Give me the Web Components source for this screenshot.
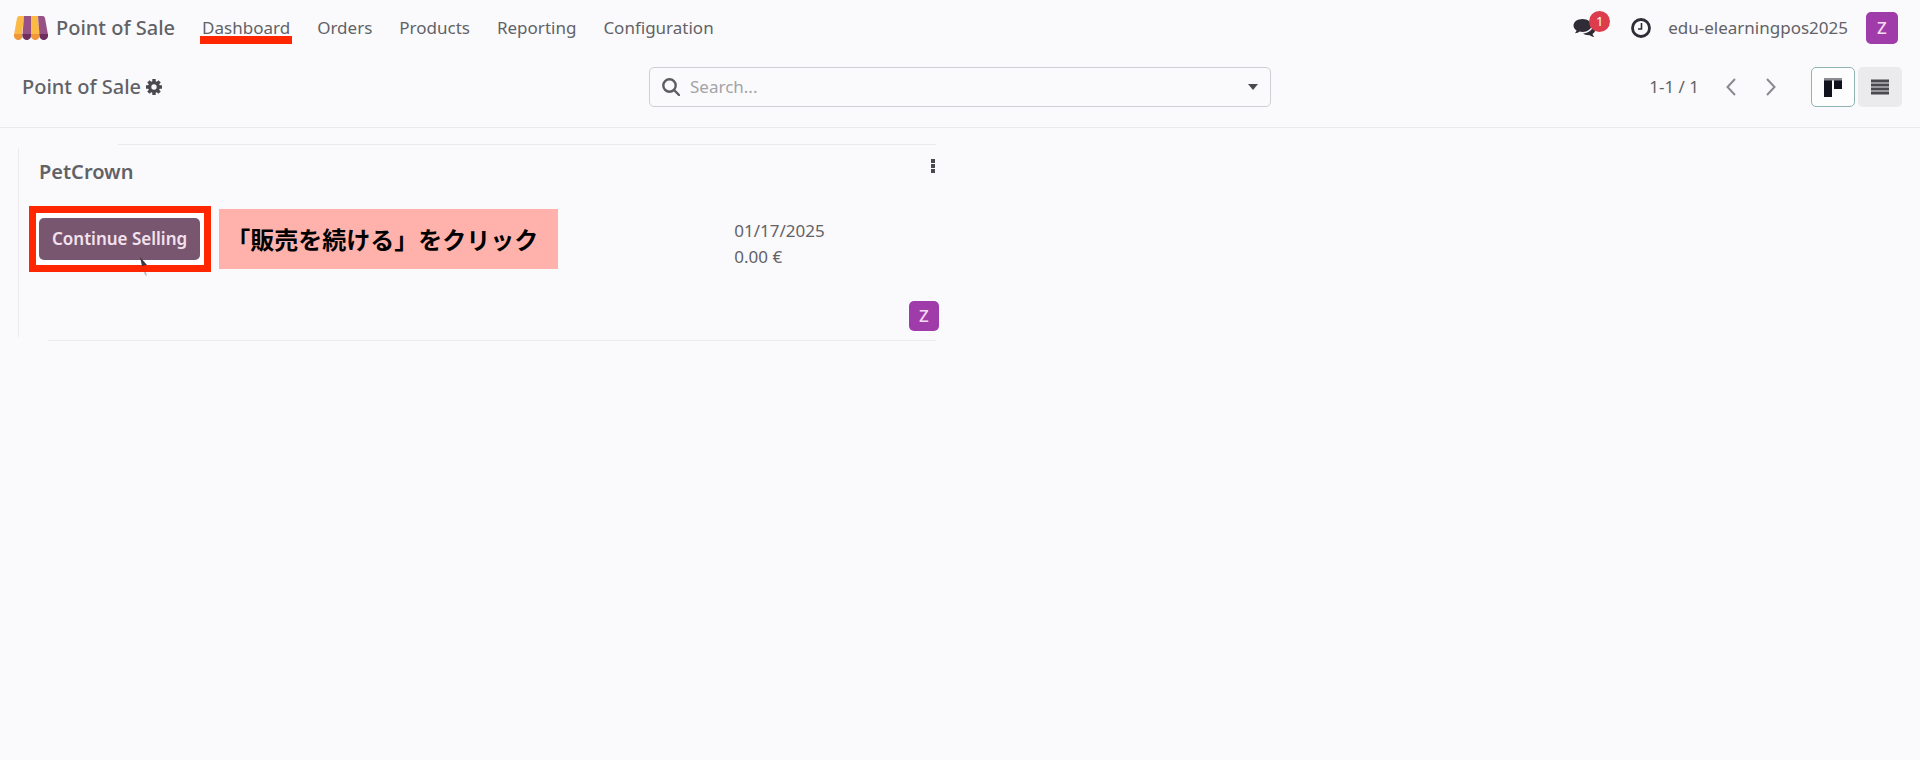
<!DOCTYPE html>
<html lang="en">
<head>
<meta charset="utf-8">
<title>Point of Sale</title>
<style>
  body {
    margin: 0;
    min-height: 100vh;
    background: #fafafd;
    color: #626266;
    font: 400 17px/24px "Noto Sans", "Noto Sans CJK JP", sans-serif;
  }
</style>
</head>
<body>
<pos-app></pos-app>

<script>
const ICONS = {
  shop: `<svg width="34" height="24" viewBox="0 0 34 24">
    <path d="M3 2q.4-2 2.400-2H10L8 19H0z" fill="#fbb945"/>
    <path d="M0 18h8.500v2a4.200 4 0 0 1-8.500 0z" fill="#f0973a"/>
    <path d="M10 0h7v19H8.500z" fill="#985184"/>
    <path d="M8.500 18H17v2a4.200 4 0 0 1-8.500 0z" fill="#6c2f5f"/>
    <path d="M17 0h7l1.500 19H17z" fill="#fbb945"/>
    <path d="M17 18h8.500v2a4.200 4 0 0 1-8.500 0z" fill="#f0973a"/>
    <path d="M24 0h4.600q2 0 2.400 2l3 17h-8.500z" fill="#985184"/>
    <path d="M25.500 18H34v2a4.200 4 0 0 1-8.500 0z" fill="#6c2f5f"/>
  </svg>`,
  gear: `<svg width="16" height="16" viewBox="0 0 16 16">
    <g stroke="#4a4a4e" stroke-width="3.400"><path d="M8 0v16M0 8h16M2.400 2.400l11.200 11.200M13.600 2.400L2.400 13.600"/></g>
    <circle cx="8" cy="8" r="6" fill="#4a4a4e"/>
    <circle cx="8" cy="8" r="2.700" fill="#fafafd"/>
  </svg>`,
  search: `<svg width="18" height="18" viewBox="0 0 18 18" fill="none" stroke="#5d5d61" stroke-width="2.400">
    <circle cx="7.500" cy="7.500" r="6.200"/><path d="M12 12l5 5" stroke-linecap="round"/>
  </svg>`,
  caret: `<svg width="10" height="6" viewBox="0 0 10 6"><path d="M0 0h10L5 6z" fill="#4a4a4e"/></svg>`,
  chat: `<svg width="24" height="20" viewBox="0 0 24 20" fill="#302c35">
    <path d="M9.500 1C4.500 1 .5 3.800.5 7.500c0 2 1.200 3.800 3.100 5-.3 1.200-1 2-1.800 2.800 2 0 3.600-.7 4.800-1.700.9.200 1.900.3 2.900.3 5 0 9-2.800 9-6.400S14.500 1 9.500 1z"/>
    <path d="M19.800 7.500c0 4.600-4.600 7.700-9.800 7.900 1.600 1.200 4 1.900 6.300 1.700 1.400 1 3 1.800 5 1.800-.9-.8-1.500-1.700-1.800-2.900 1.800-1 2.800-2.500 2.800-4.200 0-1.700-.9-3.200-2.500-4.300z"/>
  </svg>`,
  clock: `<svg width="20" height="20" viewBox="0 0 20 20" fill="none" stroke="#302c35">
    <circle cx="10" cy="10" r="8.500" stroke-width="2.800"/><path d="M10.500 5v6H7" stroke-width="1.600"/>
  </svg>`,
  prev: `<svg width="10" height="18" viewBox="0 0 10 18" fill="none" stroke="#8a8a8e" stroke-width="2"><path d="M9 1L1.500 9 9 17"/></svg>`,
  next: `<svg width="10" height="18" viewBox="0 0 10 18" fill="none" stroke="#8a8a8e" stroke-width="2"><path d="M1 1l7.500 8L1 17"/></svg>`,
  kanban: `<svg width="20" height="20" viewBox="0 0 20 20">
    <path d="M1 3h8v17H1zM11 3h8v9h-8z" fill="#10131c"/><path d="M1 1h18v2.500H1z" fill="#8b8b92"/>
  </svg>`,
  list: `<svg width="18" height="16" viewBox="0 0 18 16" stroke="#4a4a4f" stroke-width="3"><path d="M0 2h18M0 6h18M0 10h18M0 14h18"/></svg>`,
  kebab: `<svg width="4" height="14" viewBox="0 0 4 14" fill="#4a4a4e"><path d="M0 0h4v4H0zM0 5h4v4H0zM0 10h4v4H0z"/></svg>`,
  pointer: `<svg width="10" height="20" viewBox="0 0 10 20">
    <path d="M1 0l7 8-3 .5L3 9z" fill="#3f3643"/><path d="M5 15l2 0 1 4-2-1z" fill="#9a8f93" opacity=".6"/>
  </svg>`,
};

function makeTemplate(html) {
  const template = document.createElement('template');
  template.innerHTML = html;
  return template;
}

// button reset shared by the elements that hold icon buttons
const buttonReset = `
button {
  display: flex;
  align-items: center;
  justify-content: center;
  margin: 0;
  padding: 0;
  border: 0;
  background: none;
  color: inherit;
  font: inherit;
  cursor: pointer;
}
`;

class BaseElement extends HTMLElement {
  constructor() {
    super();
    this.attachShadow({ mode: 'open' });
    this.shadowRoot.appendChild(this.constructor.template.content.cloneNode(true));
  }
}

class UiIcon extends HTMLElement {
  constructor() {
    super();
    this.attachShadow({ mode: 'open' });
  }

  connectedCallback() {
    this.shadowRoot.innerHTML = `
      <style>
        :host { display: inline-flex; flex: none; }
        svg { display: block; }
      </style>
      ${ICONS[this.getAttribute('name')] || ''}
    `;
  }
}

class UserAvatar extends BaseElement {}
UserAvatar.template = makeTemplate(`
<style>
:host {
  display: flex;
  align-items: center;
  justify-content: center;
  width: var(--avatar-size, 32px);
  height: var(--avatar-size, 32px);
  border-radius: 5px;
  background: #a03caa;
  color: #f6dcf6;
  font-weight: 500;
}
</style>
<slot></slot>
`);

class NavLink extends BaseElement {
  connectedCallback() {
    this.shadowRoot.querySelector('a').setAttribute('href', this.getAttribute('href') || '#');
  }
}
NavLink.template = makeTemplate(`
<style>
:host { display: block; position: relative; }
a { color: inherit; text-decoration: none; }
:host([marked])::after {
  content: "";
  position: absolute;
  left: -2px;
  right: -2px;
  top: 20px;
  height: 8px;
  background: #ff2600;
}
</style>
<a><slot></slot></a>
`);

class MessageButton extends BaseElement {}
MessageButton.template = makeTemplate(`
<style>
${buttonReset}
:host { display: block; position: relative; }
span {
  position: absolute;
  left: 16px;
  top: -7px;
  width: 21px;
  border-radius: 50%;
  background: #dc3c4c;
  color: #fff;
  font-size: 13px;
  line-height: 21px;
  text-align: center;
}
</style>
<button type="button" aria-label="Messages"><ui-icon name="chat"></ui-icon></button>
<span><slot></slot></span>
`);

class TopBar extends BaseElement {}
TopBar.template = makeTemplate(`
<style>
${buttonReset}
:host {
  display: flex;
  align-items: center;
  justify-content: space-between;
  height: 56px;
  padding: 0 22px 0 14px;
}
.brand {
  display: flex;
  align-items: center;
  gap: 8px;
  color: inherit;
  font-size: 20px;
  font-weight: 500;
  text-decoration: none;
}
nav, .tray { display: flex; align-items: center; }
nav { gap: 27px; }
.clock { margin: 0 17px 0 34px; }
user-avatar { margin-left: 18px; }
</style>
<nav>
  <a class="brand" href="#"><ui-icon name="shop"></ui-icon>Point of Sale</a>
  <nav-link href="#dashboard" marked>Dashboard</nav-link>
  <nav-link href="#orders">Orders</nav-link>
  <nav-link href="#products">Products</nav-link>
  <nav-link href="#reporting">Reporting</nav-link>
  <nav-link href="#configuration">Configuration</nav-link>
</nav>
<div class="tray">
  <message-button>1</message-button>
  <button class="clock" type="button" aria-label="Activities"><ui-icon name="clock"></ui-icon></button>
  <span>edu-elearningpos2025</span>
  <user-avatar>Z</user-avatar>
</div>
`);

class SearchBox extends BaseElement {}
SearchBox.template = makeTemplate(`
<style>
${buttonReset}
:host {
  display: flex;
  align-items: center;
  box-sizing: border-box;
  height: 40px;
  padding: 0 12px;
  border: 1px solid #cfcfd3;
  border-radius: 5px;
}
label { display: flex; margin-right: 10px; }
input {
  flex: 1;
  min-width: 0;
  padding: 0;
  border: 0;
  outline: 0;
  background: none;
  color: inherit;
  font: inherit;
}
input::placeholder { color: #a3a3a7; opacity: 1; }
</style>
<label for="query" aria-label="Search"><ui-icon name="search"></ui-icon></label>
<input id="query" type="text" placeholder="Search...">
<button type="button" aria-label="Search options"><ui-icon name="caret"></ui-icon></button>
`);

class ViewSwitch extends BaseElement {}
ViewSwitch.template = makeTemplate(`
<style>
${buttonReset}
:host { display: flex; gap: 3px; }
button {
  box-sizing: border-box;
  width: 44px;
  height: 40px;
  border-radius: 5px;
  background: #ebebed;
}
button[aria-pressed="true"] {
  border: 1px solid #8fb5b3;
  background: #fdfdfe;
}
</style>
<button type="button" aria-label="Kanban view" aria-pressed="true"><ui-icon name="kanban"></ui-icon></button>
<button type="button" aria-label="List view" aria-pressed="false"><ui-icon name="list"></ui-icon></button>
`);

class ControlBar extends BaseElement {}
ControlBar.template = makeTemplate(`
<style>
${buttonReset}
:host {
  display: grid;
  grid-template-columns: 1fr minmax(0, 622px) 1fr;
  align-items: center;
  padding: 11px 18px 20px;
  border-bottom: 1px solid #e9e9ec;
}
.title, .tools { display: flex; align-items: center; }
.title { gap: 5px; padding-left: 4px; font-size: 20px; font-weight: 500; }
.tools { justify-content: flex-end; }
.pager { display: flex; gap: 30px; margin: 0 35px 0 27px; }
</style>
<div class="title">
  <span>Point of Sale</span>
  <button type="button" aria-label="Settings"><ui-icon name="gear"></ui-icon></button>
</div>
<search-box></search-box>
<div class="tools">
  <span>1-1 / 1</span>
  <div class="pager">
    <button type="button" aria-label="Previous"><ui-icon name="prev"></ui-icon></button>
    <button type="button" aria-label="Next"><ui-icon name="next"></ui-icon></button>
  </div>
  <view-switch></view-switch>
</div>
`);

// red frame round a control, with the mouse pointer over it
class HighlightFrame extends BaseElement {}
HighlightFrame.template = makeTemplate(`
<style>
:host {
  display: block;
  position: relative;
  padding: 5px 4px 5px 3px;
  border: 7px solid #ff2600;
  background: #fff;
}
ui-icon { position: absolute; left: 103px; top: 44px; }
</style>
<slot></slot>
<ui-icon name="pointer"></ui-icon>
`);

class PrimaryButton extends BaseElement {}
PrimaryButton.template = makeTemplate(`
<style>
${buttonReset}
:host { display: block; }
button {
  height: 42px;
  padding: 0 13px;
  border-radius: 5px;
  background: #79566f;
  color: #f3e2ee;
  font-weight: 600;
}
</style>
<button type="button"><slot></slot></button>
`);

class StepNote extends BaseElement {}
StepNote.template = makeTemplate(`
<style>
:host {
  display: block;
  padding: 0 20px 0 7px;
  background: #ffb2ab;
  color: #000;
  font: 700 24px/60px "Noto Sans CJK JP", sans-serif;
}
</style>
<slot></slot>
`);

class ShopCard extends BaseElement {}
ShopCard.template = makeTemplate(`
<style>
${buttonReset}
:host {
  --line: #ebebee;
  display: block;
  padding: 15px 9px 10px 0;
  background:
    linear-gradient(var(--line), var(--line)) 100px 0 / calc(100% - 112px) 1px no-repeat,
    linear-gradient(var(--line), var(--line)) 30px 100% / calc(100% - 42px) 1px no-repeat,
    linear-gradient(var(--line), var(--line)) 0 4px / 1px calc(100% - 8px) no-repeat;
}
header {
  display: flex;
  justify-content: space-between;
  align-items: flex-start;
  padding: 0 4px 0 21px;
}
h2 { margin: 0; font-size: 20px; line-height: 26px; font-weight: 600; }
.body {
  display: grid;
  grid-template-columns: 7fr 2fr;
  align-items: center;
  margin-top: 21px;
}
.action { display: flex; align-items: center; gap: 8px; padding-left: 11px; }
.stats { line-height: 26px; padding-top: 10px; }
footer { display: flex; justify-content: flex-end; margin-top: 29px; --avatar-size: 30px; }
</style>
<header>
  <h2><slot name="title"></slot></h2>
  <button type="button" aria-label="More"><ui-icon name="kebab"></ui-icon></button>
</header>
<div class="body">
  <div class="action"><slot name="action"></slot></div>
  <div class="stats"><slot></slot></div>
</div>
<footer><slot name="owner"></slot></footer>
`);

class PosApp extends BaseElement {}
PosApp.template = makeTemplate(`
<style>
:host { display: block; }
main {
  display: grid;
  grid-template-columns: 1fr 1fr;
  gap: 24px;
  padding: 16px 18px;
}
</style>
<top-bar></top-bar>
<control-bar></control-bar>
<main>
  <shop-card>
    <span slot="title">PetCrown</span>
    <highlight-frame slot="action"><primary-button>Continue Selling</primary-button></highlight-frame>
    <step-note slot="action" lang="ja">「販売を続ける」をクリック</step-note>
    <div>01/17/2025</div>
    <div>0.00 €</div>
    <user-avatar slot="owner">Z</user-avatar>
  </shop-card>
</main>
`);

customElements.define('ui-icon', UiIcon);
customElements.define('user-avatar', UserAvatar);
customElements.define('nav-link', NavLink);
customElements.define('message-button', MessageButton);
customElements.define('top-bar', TopBar);
customElements.define('search-box', SearchBox);
customElements.define('view-switch', ViewSwitch);
customElements.define('control-bar', ControlBar);
customElements.define('highlight-frame', HighlightFrame);
customElements.define('primary-button', PrimaryButton);
customElements.define('step-note', StepNote);
customElements.define('shop-card', ShopCard);
customElements.define('pos-app', PosApp);
</script>
</body>
</html>
